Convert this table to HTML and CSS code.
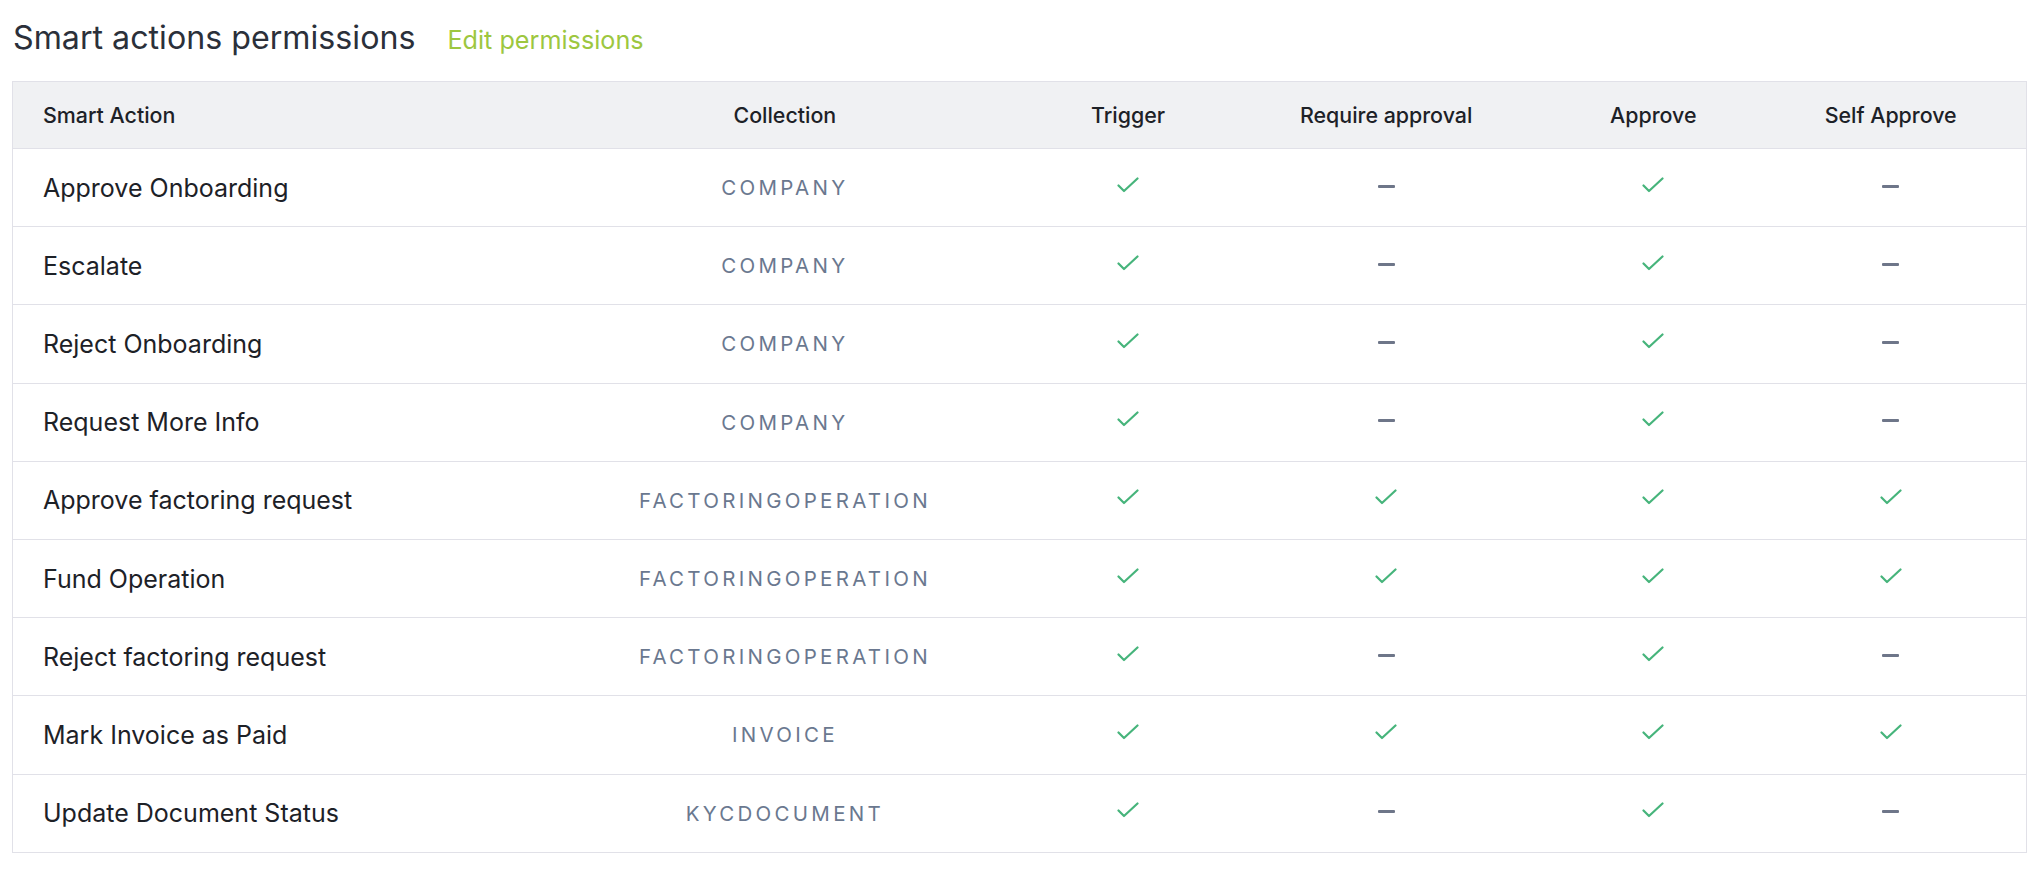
FILE: index.html
```html
<!DOCTYPE html>
<html>
<head>
<meta charset="utf-8">
<link rel="stylesheet" href="styles.css">
</head>
<body>
<div class="page">
  <div class="title-row">
    <h1 class="title">Smart actions permissions</h1>
    <a class="edit-link">Edit permissions</a>
  </div>
  <table class="perm-table">
    <colgroup>
      <col class="c-action"><col class="c-coll"><col class="c-trig"><col class="c-req"><col class="c-appr"><col class="c-self">
    </colgroup>
    <thead>
      <tr>
        <th class="th-left">Smart Action</th>
        <th>Collection</th>
        <th>Trigger</th>
        <th>Require approval</th>
        <th>Approve</th>
        <th>Self Approve</th>
      </tr>
    </thead>
    <tbody id="rows"></tbody>
  </table>
</div>
<script>
const data = [
  ["Approve Onboarding","COMPANY",1,0,1,0],
  ["Escalate","COMPANY",1,0,1,0],
  ["Reject Onboarding","COMPANY",1,0,1,0],
  ["Request More Info","COMPANY",1,0,1,0],
  ["Approve factoring request","FACTORINGOPERATION",1,1,1,1],
  ["Fund Operation","FACTORINGOPERATION",1,1,1,1],
  ["Reject factoring request","FACTORINGOPERATION",1,0,1,0],
  ["Mark Invoice as Paid","INVOICE",1,1,1,1],
  ["Update Document Status","KYCDOCUMENT",1,0,1,0]
];
const check = '<svg class="ico-check" width="22" height="16" viewBox="0 0 22 16"><path d="M1.5 8.5 L7 14 L20.5 1.5" fill="none" stroke="#46b47b" stroke-width="2.2" stroke-linecap="round" stroke-linejoin="round"/></svg>';
const dash = '<span class="ico-dash"></span>';
const tb = document.getElementById('rows');
tb.innerHTML = data.map(r => '<tr><td class="td-left">' + r[0] + '</td><td class="coll">' + r[1] + '</td>' +
  r.slice(2).map(v => '<td class="icon-cell">' + (v ? check : dash) + '</td>').join('') + '</tr>').join('');
</script>
</body>
</html>
```

FILE: styles.css
```css
html, body {
  margin: 0;
  padding: 0;
  background: #ffffff;
}
body {
  font-family: Inter, "Noto Sans", sans-serif;
  color: #1d2127;
}
.page {
  padding: 18px 15px 0 12px;
}
.title-row {
  display: flex;
  align-items: baseline;
  gap: 32px;
  height: 63px;
  padding-left: 1px;
}
.title {
  margin: 0;
  font-size: 32.2px;
  font-weight: 400;
  color: #2b303a;
  line-height: 40px;
}
.edit-link {
  font-size: 25.2px;
  color: #9dc73f;
  text-decoration: none;
}
.perm-table {
  width: 2015px;
  border-collapse: collapse;
  table-layout: fixed;
  border: 1px solid #e1e1e8;
}
.c-action { width: 522px; }
.c-coll { width: 500px; }
.c-trig { width: 186px; }
.c-req { width: 330px; }
.c-appr { width: 204px; }
.c-self { width: 271px; }
thead tr {
  background: #f0f1f3;
  height: 67px;
}
th {
  font-size: 21.4px;
  font-weight: 500;
  color: #1d2127;
  text-align: center;
  padding: 0;
  border-bottom: 1px solid #e1e1e8;
}
.th-left {
  text-align: left;
  padding-left: 30px;
}
tbody tr {
  height: 78.2px;
  border-bottom: 1px solid #e1e1e8;
}
td {
  padding: 0;
  text-align: center;
  vertical-align: middle;
}
.td-left {
  text-align: left;
  padding-left: 30px;
  font-size: 25px;
  color: #1d2127;
}
.coll {
  font-size: 20.5px;
  letter-spacing: 0.16em;
  color: #6a788f;
}
.icon-cell {
  line-height: 0;
}
.ico-check {
  display: inline-block;
  position: relative;
  top: -3px;
}
.ico-dash {
  display: inline-block;
  width: 17px;
  height: 3px;
  background: #6e7689;
  border-radius: 1px;
  position: relative;
  top: -3px;
}
```
